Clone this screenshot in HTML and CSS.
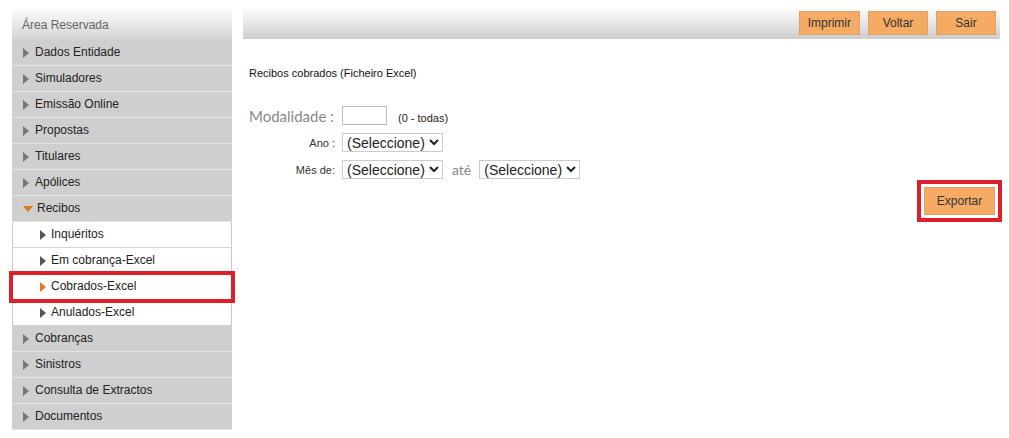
FILE: index.html
```html
<!DOCTYPE html>
<html>
  <head>
    <meta name="viewport" content="width=device-width, initial-scale=1">
    <link rel="stylesheet" href="styles.css">
  </head>
  <body>
    <div class="page">

      <div class="sidebar">
        <div class="side-title">Área Reservada</div>
        <ul class="menu">
          <li class="item"><span class="arrow"></span>Dados Entidade</li>
          <li class="item"><span class="arrow"></span>Simuladores</li>
          <li class="item"><span class="arrow"></span>Emissão Online</li>
          <li class="item"><span class="arrow"></span>Propostas</li>
          <li class="item"><span class="arrow"></span>Titulares</li>
          <li class="item"><span class="arrow"></span>Apólices</li>
          <li class="item open"><span class="arrow down"></span>Recibos</li>
          <li class="sub"><span class="arrow dark"></span>Inquéritos</li>
          <li class="sub"><span class="arrow dark"></span>Em cobrança-Excel</li>
          <li class="sub current"><span class="arrow orange"></span>Cobrados-Excel</li>
          <li class="sub"><span class="arrow dark"></span>Anulados-Excel</li>
          <li class="item"><span class="arrow"></span>Cobranças</li>
          <li class="item"><span class="arrow"></span>Sinistros</li>
          <li class="item"><span class="arrow"></span>Consulta de Extractos</li>
          <li class="item"><span class="arrow"></span>Documentos</li>
        </ul>
      </div>

      <div class="main">
        <div class="topbar">
          <button class="btn">Imprimir</button>
          <button class="btn">Voltar</button>
          <button class="btn">Sair</button>
        </div>

        <div class="content">
          <h2 class="title">Recibos cobrados (Ficheiro Excel)</h2>

          <div class="form">
            <div class="row">
              <label class="big-label">Modalidade :</label>
              <input class="small-input" type="text">
              <span class="hint">(0 - todas)</span>
            </div>
            <div class="row">
              <label class="label">Ano :</label>
              <select class="sel"><option>(Seleccione)</option></select>
            </div>
            <div class="row">
              <label class="label">Mês de:</label>
              <select class="sel"><option>(Seleccione)</option></select>
              <span class="ate">até</span>
              <select class="sel"><option>(Seleccione)</option></select>
            </div>
          </div>

          <div class="actions">
            <button class="btn export">Exportar</button>
          </div>
        </div>
      </div>

    </div>
  </body>
</html>
```

FILE: styles.css
```css
body {
  margin: 0;
  background: #fff;
  font-family: "Liberation Sans", Arial, sans-serif;
  font-size: 12px;
  color: #222;
}

.page {
  display: flex;
  padding: 8px 0 0 12px;
}

/* left menu */
.sidebar {
  width: 220px;
  flex: none;
}

.side-title {
  height: 32px;
  line-height: 34px;
  padding-left: 10px;
  color: #666;
  font-size: 12px;
  background: linear-gradient(#fdfdfd, #d3d3d3);
}

.menu {
  list-style: none;
  margin: 0;
  padding: 0;
}

.menu li {
  height: 25px;
  line-height: 25px;
  border-bottom: 1px solid #e3e3e3;
  display: flex;
  align-items: center;
  color: #222;
}

.item {
  background: #cfcfcf;
  padding-left: 11px;
}

.sub {
  background: #fff;
  padding-left: 27px;
  border-left: 1px solid #c8c8c8;
  border-right: 1px solid #c8c8c8;
  border-bottom-color: #d6d6d6 !important;
}

.current {
  outline: 4px solid #dc1f2a;
  outline-offset: -1px;
  position: relative;
}

.arrow {
  width: 0;
  height: 0;
  border-top: 5px solid transparent;
  border-bottom: 5px solid transparent;
  border-left: 6px solid #777;
  margin-right: 6px;
}

.sub .arrow {
  margin-right: 5px;
}

.arrow.dark {
  border-left-color: #555;
}

.arrow.orange {
  border-left-color: #e0781c;
}

.arrow.down {
  border-left: 5px solid transparent;
  border-right: 5px solid transparent;
  border-top: 6px solid #e0781c;
  border-bottom: none;
  margin-right: 4px;
}

/* right part */
.main {
  flex: 1;
  margin-left: 11px;
  margin-right: 9px;
}

.topbar {
  height: 32px;
  margin-top: -1px;
  background: linear-gradient(#ffffff, #cdcdcd);
  display: flex;
  justify-content: flex-end;
  align-items: flex-start;
  gap: 8px;
  padding: 4px 4px 0 0;
  box-sizing: border-box;
}

.btn {
  height: 24px;
  min-width: 60px;
  padding: 0 8px;
  background: #f5ab64;
  border: 1px solid #dca06a;
  color: #333;
  font-family: "Liberation Sans", Arial, sans-serif;
  font-size: 12px;
}

.content {
  padding-left: 6px;
}

.title {
  margin: 28px 0 27px;
  font-size: 11px;
  font-weight: normal;
  color: #111;
}

.form {
  display: flex;
  flex-direction: column;
  gap: 8px;
}

.row {
  display: flex;
  align-items: center;
}

.big-label,
.label {
  width: 86px;
  text-align: right;
  margin-right: 7px;
}

.big-label {
  font-family: "Lato", "Liberation Sans", sans-serif;
  font-size: 15px;
  color: #888;
  text-align: left;
}

.label {
  font-size: 11px;
  color: #333;
}

.small-input {
  width: 45px;
  height: 19px;
  box-sizing: border-box;
  border: 1px solid #bbb;
  margin: 0;
}

.hint {
  font-size: 11px;
  margin-left: 11px;
  margin-top: 4px;
}

.sel {
  width: 101px;
  height: 19px;
  font-family: "Liberation Sans", Arial, sans-serif;
  font-size: 14px;
  border: 1px solid #ccc;
  background: #fff;
  color: #222;
  margin: 0;
  padding: 0;
}

.ate {
  font-family: "Lato", "Liberation Sans", sans-serif;
  font-size: 14px;
  color: #888;
  margin: 0 8px 0 9px;
}

.actions {
  display: flex;
  justify-content: flex-end;
  margin-top: 8px;
  padding-right: 5px;
}

.export {
  height: 28px;
  width: 71px;
  outline: 4px solid #dc1f2a;
  outline-offset: 3px;
}
```
